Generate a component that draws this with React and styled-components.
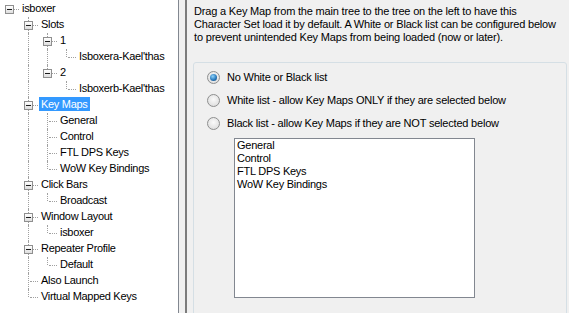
import React from "react"
import styled, { createGlobalStyle } from "styled-components"

const GlobalStyle = createGlobalStyle`
    html, body {
        margin: 0;
        padding: 0;
        background: #f0f0f0;
    }
    body {
        font-family: "Liberation Sans", Arial, sans-serif;
        font-size: 11px;
        color: #000;
    }
`

const Window = styled.div`
    display: flex;
    width: 569px;
    height: 313px;
    overflow: hidden;
    background: #f0f0f0;
`

const TreePane = styled.div`
    width: 178px;
    flex: none;
    padding-top: 1px;
    background: #fff;
    border-right: 1px solid #828790;
`

const Row = styled.div`
    display: flex;
    height: 16px;
`

const Rail = styled.div`
    position: relative;
    width: 19px;
    flex: none;
    &::before {
        content: "";
        display: ${p => (p.$line ? "block" : "none")};
        position: absolute;
        left: 9px;
        top: 0;
        bottom: 0;
        border-left: 1px dotted #a0a0a0;
    }
`

const Joint = styled.div`
    position: relative;
    width: 19px;
    flex: none;
    &::before {
        content: "";
        display: ${p => (p.$first && !p.$next ? "none" : "block")};
        position: absolute;
        left: 9px;
        top: ${p => (p.$first ? "8px" : "0")};
        bottom: ${p => (p.$next ? "0" : "8px")};
        border-left: 1px dotted #a0a0a0;
    }
    &::after {
        content: "";
        position: absolute;
        left: 11px;
        right: 0;
        top: 8px;
        border-top: 1px dotted #a0a0a0;
    }
`

const ExpandBox = styled.span`
    position: absolute;
    z-index: 1;
    left: 5px;
    top: 4px;
    width: 9px;
    height: 9px;
    box-sizing: border-box;
    border: 1px solid #8f8f8f;
    background: linear-gradient(#ffffff, #dedede);
    &::after {
        content: "";
        position: absolute;
        left: 1px;
        top: 3px;
        width: 5px;
        height: 1px;
        background: #1c1c1c;
    }
`

const NodeLabel = styled.span`
    height: 14px;
    margin-left: 1px;
    padding: 0 2px;
    line-height: 14px;
    white-space: nowrap;
    letter-spacing: -0.3px;
    background: ${p => (p.$selected ? "#3399ff" : "transparent")};
    color: ${p => (p.$selected ? "#fff" : "#000")};
`

const Splitter = styled.div`
    width: 6px;
    flex: none;
    border-right: 2px solid #7c7c7c;
`

const Content = styled.div`
    flex: 1;
    padding: 5px 0 0 6px;
    border-left: 1px solid #f0f0f0;
`

const Description = styled.p`
    margin: 0;
    line-height: 13px;
    letter-spacing: -0.18px;
    white-space: nowrap;
`

const GroupBox = styled.div`
    width: 374px;
    height: 300px;
    margin: 18px 0 0 -1px;
    padding: 6px 0 0 13px;
    box-sizing: border-box;
    border: 1px solid #d5dfe5;
    border-radius: 3px;
`

const RadioGroup = styled.div`
    display: flex;
    flex-direction: column;
    gap: 7px;
`

const RadioRow = styled.label`
    display: flex;
    align-items: center;
    gap: 7px;
    height: 16px;
    letter-spacing: -0.2px;
    white-space: nowrap;
`

const Radio = styled.span`
    display: flex;
    align-items: center;
    justify-content: center;
    width: 13px;
    height: 13px;
    flex: none;
    box-sizing: border-box;
    border: 1px solid #8e8f8f;
    border-radius: 50%;
    background: radial-gradient(circle at 50% 40%, #fafafa, #e2e2e2 70%, #d0d0d0);
    &::after {
        content: "";
        display: ${p => (p.$checked ? "block" : "none")};
        width: 7px;
        height: 7px;
        border-radius: 50%;
        background: radial-gradient(circle at 40% 35%, #8fd3f8, #2a7bbf 55%, #0f3e66);
    }
`

const ListBox = styled.div`
    width: 241px;
    height: 160px;
    margin: 7px 0 0 27px;
    padding-left: 2px;
    box-sizing: border-box;
    border: 1px solid #828790;
    background: #fff;
`

const ListItem = styled.div`
    line-height: 13px;
    letter-spacing: -0.25px;
    white-space: nowrap;
`

const nodes = [
    { label: "isboxer", level: 0, open: true },
    { label: "Slots", level: 1, open: true },
    { label: "1", level: 2, open: true },
    { label: "Isboxera-Kael'thas", level: 3 },
    { label: "2", level: 2, open: true },
    { label: "Isboxerb-Kael'thas", level: 3 },
    { label: "Key Maps", level: 1, open: true, selected: true },
    { label: "General", level: 2 },
    { label: "Control", level: 2 },
    { label: "FTL DPS Keys", level: 2 },
    { label: "WoW Key Bindings", level: 2 },
    { label: "Click Bars", level: 1, open: true },
    { label: "Broadcast", level: 2 },
    { label: "Window Layout", level: 1, open: true },
    { label: "isboxer", level: 2 },
    { label: "Repeater Profile", level: 1, open: true },
    { label: "Default", level: 2 },
    { label: "Also Launch", level: 1 },
    { label: "Virtual Mapped Keys", level: 1 },
]

// does the node at i have a later sibling?
const hasNext = (i) => {
    const level = nodes[i].level
    for (let j = i + 1; j < nodes.length; j++) {
        if (nodes[j].level < level) return false
        if (nodes[j].level === level) return true
    }
    return false
}

const rows = (() => {
    const open = []
    return nodes.map((n, i) => {
        const rails = open.slice(0, n.level)
        const next = hasNext(i)
        open[n.level] = next
        return { ...n, rails, next, first: i === 0 }
    })
})()

const keyMaps = ["General", "Control", "FTL DPS Keys", "WoW Key Bindings"]

const radios = [
    { text: "No White or Black list", checked: true },
    { text: "White list - allow Key Maps ONLY if they are selected below" },
    { text: "Black list - allow Key Maps if they are NOT selected below" },
]

const App = () => {
    return (
        <Window>
            <GlobalStyle />
            <TreePane>
                {rows.map((r, i) => (
                    <Row key={i}>
                        {r.rails.map((line, k) => <Rail key={k} $line={line} />)}
                        <Joint $first={r.first} $next={r.next}>
                            {r.open && <ExpandBox />}
                        </Joint>
                        <NodeLabel $selected={r.selected}>{r.label}</NodeLabel>
                    </Row>
                ))}
            </TreePane>
            <Splitter />
            <Content>
                <Description>
                    Drag a Key Map from the main tree to the tree on the left to have this<br />
                    Character Set load it by default. A White or Black list can be configured below<br />
                    to prevent unintended Key Maps from being loaded (now or later).
                </Description>
                <GroupBox>
                    <RadioGroup>
                        {radios.map((r) => (
                            <RadioRow key={r.text}>
                                <Radio $checked={r.checked} />
                                {r.text}
                            </RadioRow>
                        ))}
                    </RadioGroup>
                    <ListBox>
                        {keyMaps.map((k) => <ListItem key={k}>{k}</ListItem>)}
                    </ListBox>
                </GroupBox>
            </Content>
        </Window>
    )
}

export default App
